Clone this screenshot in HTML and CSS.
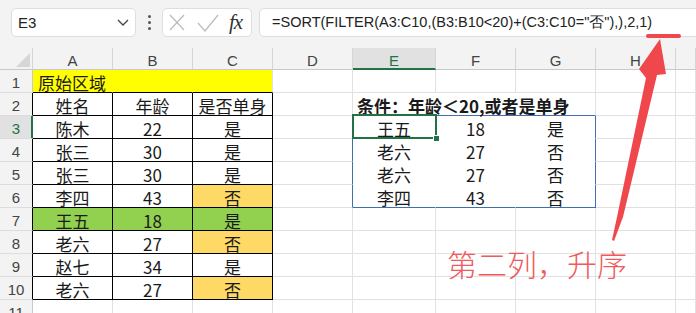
FILE: index.html
```html
<!DOCTYPE html>
<html lang="zh">
<head>
  <meta charset="UTF-8" />
  <title>SORT + FILTER</title>
  <link rel="stylesheet" href="styles.css">
</head>
<body>
<div class="screen">

  <div class="toolbar">
    <div class="namebox">
      <span>E3</span>
      <svg width="12" height="7" viewBox="0 0 12 7"><polyline points="1,1 6,6 11,1" fill="none" stroke="#444" stroke-width="1.3"/></svg>
    </div>
    <div class="grip"><i></i><i></i><i></i></div>
    <div class="fxbox">
      <svg class="ico-x" width="16" height="17" viewBox="0 0 16 17"><path d="M1 1 L15 16 M15 1 L1 16" stroke="#bcbcbc" stroke-width="1.3" fill="none"/></svg>
      <svg class="ico-ok" width="22" height="18" viewBox="0 0 22 18"><polyline points="1,9 8,17 21,1" fill="none" stroke="#bcbcbc" stroke-width="1.3"/></svg>
      <span class="fx">fx</span>
    </div>
    <div class="formula">=SORT(FILTER(A3:C10,(B3:B10&lt;20)+(C3:C10="否"),),2,1)</div>
  </div>

  <div class="sheet">
    <!-- column heads -->
    <div class="ch corner"><svg width="14" height="14" viewBox="0 0 14 14"><polygon points="14,0 14,14 0,14" fill="#d6d6d6"/></svg></div>
    <div class="ch">A</div><div class="ch">B</div><div class="ch">C</div><div class="ch">D</div>
    <div class="ch sel">E</div><div class="ch">F</div><div class="ch">G</div><div class="ch">H</div><div class="ch"></div>

    <!-- 1 -->
    <div class="rh">1</div>
    <div class="y left">原始区域</div><div class="y"></div><div class="y last"></div>
    <div></div><div></div><div></div><div></div><div></div><div></div>

    <!-- 2 -->
    <div class="rh edge">2</div>
    <div class="b">姓名</div><div class="b">年龄</div><div class="b">是否单身</div>
    <div></div>
    <div class="cond">条件：年龄＜20,或者是单身</div>
    <div></div><div></div>

    <!-- 3 -->
    <div class="rh edge sel">3</div>
    <div class="b">陈木</div><div class="b">22</div><div class="b">是</div>
    <div class="dl"></div>
    <div class="res cursor">王五</div><div class="res">18</div><div class="res rr">是</div>
    <div></div><div></div>

    <!-- 4 -->
    <div class="rh edge">4</div>
    <div class="b">张三</div><div class="b">30</div><div class="b">是</div>
    <div class="dl"></div>
    <div class="res">老六</div><div class="res">27</div><div class="res rr">否</div>
    <div></div><div></div>

    <!-- 5 -->
    <div class="rh edge">5</div>
    <div class="b">张三</div><div class="b">30</div><div class="b">是</div>
    <div class="dl"></div>
    <div class="res">老六</div><div class="res">27</div><div class="res rr">否</div>
    <div></div><div></div>

    <!-- 6 -->
    <div class="rh edge">6</div>
    <div class="b">李四</div><div class="b">43</div><div class="b o">否</div>
    <div class="dl"></div>
    <div class="res rb">李四</div><div class="res rb">43</div><div class="res rr rb">否</div>
    <div></div><div></div>

    <!-- 7 -->
    <div class="rh edge">7</div>
    <div class="b g">王五</div><div class="b g">18</div><div class="b g">是</div>
    <div></div><div></div><div></div><div></div><div></div><div></div>

    <!-- 8 -->
    <div class="rh edge">8</div>
    <div class="b">老六</div><div class="b">27</div><div class="b o">否</div>
    <div></div><div></div><div></div><div></div><div></div><div></div>

    <!-- 9 -->
    <div class="rh edge">9</div>
    <div class="b">赵七</div><div class="b">34</div><div class="b">是</div>
    <div></div><div></div><div></div><div></div><div></div><div></div>

    <!-- 10 -->
    <div class="rh edge">10</div>
    <div class="b">老六</div><div class="b">27</div><div class="b o">否</div>
    <div></div><div></div><div></div><div></div><div></div><div></div>

    <!-- 11 -->
    <div class="rh">11</div>
    <div></div><div></div><div></div><div></div><div></div><div></div><div></div><div></div><div></div>
  </div>

  <svg class="arrow" width="696" height="313" viewBox="0 0 696 313">
    <line x1="648" y1="36" x2="679" y2="36" stroke="#f0474d" stroke-width="4" stroke-linecap="round"/>
    <polygon fill="#f0474d" points="660,39 666,74 657,75 623,217 614,241 612,240 617,217 646,78 639,69"/>
  </svg>
  <div class="note">第二列，升序</div>

</div>
</body>
</html>
```

FILE: styles.css
```css
body {
  margin: 0;
  background: #fff;
}
.screen {
  position: relative;
  width: 696px;
  height: 313px;
  overflow: hidden;
  font-family: "Noto Sans CJK SC", sans-serif;
  color: #1a1a1a;
}

/* formula bar */
.toolbar {
  height: 48px;
  box-sizing: border-box;
  padding: 8px 0 11px 11px;
  background: #f3f3f3;
  display: flex;
  align-items: stretch;
}
.namebox {
  width: 125px;
  box-sizing: border-box;
  background: #fff;
  border: 1px solid #dedede;
  border-radius: 5px;
  padding: 0 6px;
  display: flex;
  align-items: center;
  justify-content: space-between;
  font: 15px "Liberation Sans", sans-serif;
  color: #222;
}
.grip {
  width: 3px;
  margin: 0 11px 0 12px;
  display: flex;
  flex-direction: column;
  justify-content: center;
  gap: 3px;
}
.grip i {
  display: block;
  width: 3px;
  height: 3px;
  border-radius: 50%;
  background: #555;
}
.fxbox {
  width: 90px;
  box-sizing: border-box;
  background: #fff;
  border: 1px solid #dedede;
  border-radius: 5px;
  display: flex;
  align-items: center;
  padding-left: 6px;
}
.ico-ok { margin-left: 12px; }
.fx {
  margin-left: 10px;
  font: italic 21px "Liberation Serif", serif;
  color: #333;
  letter-spacing: -1px;
}
.formula {
  flex: 1;
  margin-left: 7px;
  margin-right: -10px;
  background: #fff;
  border: 1px solid #dedede;
  border-radius: 5px;
  padding-left: 12px;
  display: flex;
  align-items: center;
  font: 14.5px "Liberation Sans", sans-serif;
  color: #222;
  white-space: nowrap;
}

/* grid */
.sheet {
  display: grid;
  grid-template-columns: 33px 80px 80px 80px 80px 83px 80px 80px 80px 1fr;
  grid-template-rows: 22px repeat(11, 23px);
}
.sheet > div {
  box-sizing: border-box;
  border-right: 1px solid #e1e1e1;
  border-bottom: 1px solid #e1e1e1;
  padding-top: 3px;
  line-height: 20px;
  font-size: 17px;
  text-align: center;
  white-space: nowrap;
}
.sheet > .ch {
  background: #f3f3f3;
  border-right-color: #d6d6d6;
  border-bottom-color: #c9c9c9;
  font: 15px "Liberation Sans", sans-serif;
  line-height: 19px;
  color: #444;
}
.sheet > .ch.sel {
  background: #e1e1e1;
  color: #217346;
  border-bottom: 2px solid #217346;
}
.sheet > .corner {
  padding: 4px 2px 0 0;
  text-align: right;
}
.sheet > .rh {
  background: #f3f3f3;
  border-bottom-color: #dcdcdc;
  border-right-color: #c9c9c9;
  font: 15px "Liberation Sans", sans-serif;
  line-height: 19px;
  color: #444;
}
.sheet > .rh.edge { border-right-color: #000; }
.sheet > .rh.sel {
  background: #e1e1e1;
  color: #217346;
  border-right-color: #217346;
  box-shadow: inset -1px 0 #217346;
}

.sheet > .y {
  background: #ffff00;
  border-right-color: #ffff00;
  border-bottom-color: #000;
}
.sheet > .y.last { border-right-color: #e1e1e1; }
.sheet > .left {
  text-align: left;
  padding-left: 5px;
}
.sheet > .b {
  border-right-color: #000;
  border-bottom-color: #000;
}
.sheet > .o { background: #ffd966; }
.sheet > .g { background: #92d050; }

.sheet > .cond {
  grid-column: span 3;
  text-align: left;
  padding-left: 4px;
  font-weight: bold;
  border-bottom-color: #3d6fb1;
}
.sheet > .dl { border-right-color: #3d6fb1; }
.sheet > .res {
  border-right-color: #fff;
  border-bottom-color: #fff;
}
.sheet > .res.rr { border-right-color: #3d6fb1; }
.sheet > .res.rb { border-bottom-color: #3d6fb1; }

.cursor { position: relative; }
.cursor::after {
  content: "";
  position: absolute;
  left: -1px;
  top: -2px;
  right: -2px;
  bottom: -1px;
  border: 2px solid #217346;
}
.cursor::before {
  content: "";
  position: absolute;
  right: -5px;
  bottom: -4px;
  width: 5px;
  height: 5px;
  background: #217346;
  border: 1px solid #fff;
  z-index: 1;
}

/* annotation */
.arrow {
  position: absolute;
  left: 0;
  top: 0;
  pointer-events: none;
}
.note {
  position: absolute;
  left: 447px;
  top: 248px;
  font-size: 30px;
  font-weight: 300;
  line-height: 30px;
  color: #f05a5e;
  white-space: nowrap;
}
```
